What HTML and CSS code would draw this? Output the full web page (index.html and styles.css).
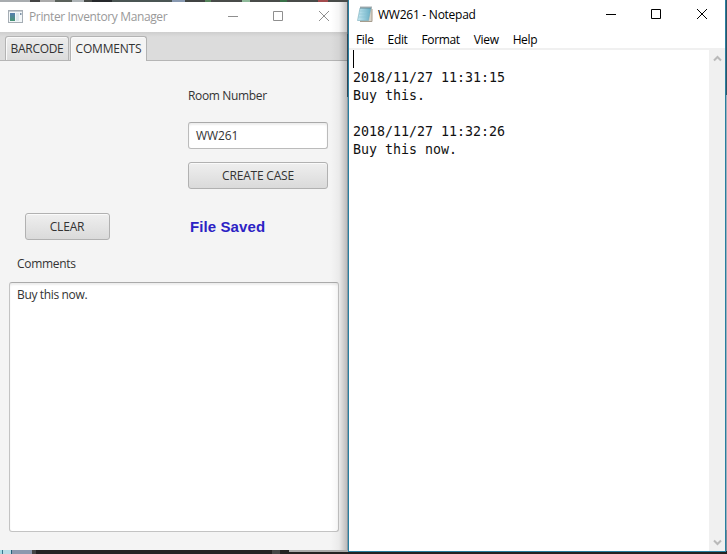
FILE: index.html
```html
<!DOCTYPE html>
<html lang="en">
<head>
<meta charset="utf-8">
<title>Printer Inventory Manager</title>
<link rel="stylesheet" href="styles.css">
</head>
<body>
<main class="desktop">
  <section class="window manager">
    <header class="titlebar">
      <svg class="app-icon" width="15" height="13" viewBox="0 0 15 13"><defs><linearGradient id="a" x2="0" y2="1"><stop stop-color="#557eb0"/><stop offset="1" stop-color="#469473"/></linearGradient></defs><rect x=".5" y=".5" width="14" height="12" fill="#f3f7f9" stroke="#a5adb4"/><path d="M1 1.5h13" stroke="#c5ccd2"/><path d="M2 3h5v8H2z" fill="url(#a)"/><path d="M8 3h3v8H8z" fill="#dce7ec"/><path d="M12 3h1.500v2H12z" fill="#8295a9"/></svg>
      <h1 class="title">Printer Inventory Manager</h1>
      <svg class="controls" width="103" height="12" viewBox="0 0 103 12" fill="none" stroke="#8f8f8f"><path d="M0 6.500h10M45.500 1.500h9v9h-9zM91 1l10 10M101 1L91 11"/></svg>
    </header>
    <nav class="tabs">
      <button class="tab">BARCODE</button>
      <button class="tab active">COMMENTS</button>
    </nav>
    <div class="form">
      <div class="room">
        <label class="room-label">Room Number</label>
        <div class="field">WW261</div>
        <button class="button create">CREATE CASE</button>
      </div>
      <div class="actions">
        <button class="button clear">CLEAR</button>
        <output class="status">File Saved</output>
      </div>
      <label class="comments-label">Comments</label>
      <div class="comments">Buy this now.</div>
    </div>
  </section>
  <section class="window notepad">
    <header class="np-titlebar">
      <svg class="np-icon" width="17" height="17" viewBox="0 0 17 17"><defs><linearGradient id="b"><stop stop-color="#c8e9f2"/><stop offset="1" stop-color="#65adc4"/></linearGradient></defs><path d="M4 2l11 .5v13L3 16z" fill="#d8d3c9"/><path d="M15 3v12.500H3" fill="none" stroke="#a69d8e"/><path d="M3 2h11l-2.500 12.500H.5z" fill="url(#b)" stroke="#79acbb" stroke-width=".6"/><path d="M2.500 5h10M2 8h10M1.500 11h10" stroke="#87bdcd" stroke-width=".5"/><path d="M3.500 1.500h11" stroke="#53666c" stroke-width="2" stroke-dasharray="1 1"/></svg>
      <h2 class="title">WW261 - Notepad</h2>
      <svg class="np-controls" width="103" height="12" viewBox="0 0 103 12" fill="none" stroke="#000"><path d="M0 6.500h10M45.500 1.500h9v9h-9zM91 1l10 10M101 1L91 11"/></svg>
    </header>
    <nav class="menu"><span>File</span><span>Edit</span><span>Format</span><span>View</span><span>Help</span></nav>
    <div class="editor">
      <pre class="document"><i class="caret"></i>
2018/11/27 11:31:15
Buy this.

2018/11/27 11:32:26
Buy this now.</pre>
      <div class="scrollbar">
        <svg width="9" height="7" viewBox="0 0 9 7" fill="none" stroke="#b9b9b9" stroke-width="2"><path d="M1 5.500l3.500-3.500L8 5.500"/></svg>
        <svg width="9" height="7" viewBox="0 0 9 7" fill="none" stroke="#b9b9b9" stroke-width="2"><path d="M1 1.500L4.500 5 8 1.500"/></svg>
      </div>
    </div>
  </section>
</main>
</body>
</html>
```
FILE: styles.css
```css
* { box-sizing: border-box; }
body { margin: 0; font: 12px/16px "Open Sans", "Noto Sans", sans-serif; letter-spacing: -.35px; color: #333; }
.desktop {
  position: relative; width: 727px; height: 554px; overflow: hidden;
  background:
    linear-gradient(90deg, #a8acaf 0 30px, #444 30px 40px, #aaa 40px 55px, #59605a 55px 72px, #aeb4b7 72px 84px, #464946 84px 92px, #25282b 92px 112px, #4a5553 112px 172px, #8798b0 172px 185px, #404342 185px 205px, #56845c 205px 211px, #484b49 211px 242px, #8fb99a 242px 250px, #484b49 250px 280px, #397047 280px 287px, #484b49 287px 318px, #a34b4d 318px 328px, #484b49 328px) 0 0 / 348px 2px no-repeat,
    linear-gradient(#315365 0 95px, #9fadba 95px 530px, #788794 530px) 726px 0 / 1px 551px no-repeat,
    linear-gradient(90deg, #a7dce6 0 2px, #38758c 2px 3px, #b8dce6 3px 11px, #286078 11px 12px, #8c98ae 12px 32px, #444 32px 36px, #242222 36px 272px, #464646 272px 280px, #242222 280px 289px, #aaa 289px 348px, #202426 348px) 0 550px / 727px 2px no-repeat,
    linear-gradient(90deg, #a7dce6 0 2px, #38758c 2px 3px, #b8dce6 3px 11px, #286078 11px 12px, #8c98ae 12px 32px, #444 32px 36px, #242222 36px 272px, #464646 272px 280px, #242222 280px) 0 552px / 727px 2px no-repeat,
    linear-gradient(#53636e 0 32px, #344654 32px 95px, #8b9ba5 95px) 347px 2px / 1px 548px no-repeat,
    #252525;
}
.window { position: absolute; display: flex; flex-direction: column; }
.manager { left: 0; top: 2px; width: 347px; height: 548px; background: #f4f4f4; }
.manager::after { content: ""; position: absolute; right: 0; top: 0; width: 16px; height: 548px; background: linear-gradient(90deg, transparent, rgba(0,0,0,.04) 50%, rgba(0,0,0,.23)); }
.titlebar { height: 30px; flex: none; display: flex; align-items: center; padding: 0 16px 0 8px; background: #fff; color: #999; letter-spacing: -.37px; }
.title { margin: 0; font: inherit; }
.titlebar .title { margin: 0 auto 0 6px; }
.titlebar .app-icon { margin-bottom: 2px; }
.titlebar .controls { margin-bottom: 2px; }
.tabs { height: 29px; flex: none; display: flex; align-items: flex-end; gap: 1px; padding-left: 5px; background: linear-gradient(#cecece, #dcdcdc 5px); border-bottom: 1px solid #b5b5b5; }
.tab { height: 24px; width: 64px; padding: 0; border: 1px solid #b3b3b3; border-bottom: 0; border-radius: 3px 3px 0 0; background: linear-gradient(#ededed, #dcdcdc); box-shadow: inset 1px 1px #fafafa; font: inherit; letter-spacing: -.3px; color: #333; }
.tab.active { width: 77px; height: 25px; margin-bottom: -1px; background: #f4f4f4; letter-spacing: -.2px; }
.form { padding: 27px 9px 0; }
.room { width: 140px; margin-left: 179px; display: flex; flex-direction: column; }
.room-label { height: 34px; }
.field { height: 27px; padding: 5px 7px; background: #fff; border: 1px solid #bbb; border-top-color: #a9a9a9; border-radius: 3px; box-shadow: inset 0 2px 2px #eee; letter-spacing: -.1px; }
.button { height: 27px; padding: 0; border: 1px solid #b1b1b1; border-radius: 3px; background: linear-gradient(#efefef, #dadada); box-shadow: inset 0 1px #fafafa; font: inherit; letter-spacing: -.2px; color: #333; }
.create { margin-top: 13px; }
.actions { display: flex; align-items: center; margin: 24px 0 0 16px; }
.clear { width: 85px; padding-right: 1px; }
.status { margin-left: 80px; font: bold 15px/18px "Liberation Sans", Arial, sans-serif; letter-spacing: .1px; color: #2c22c4; }
.comments-label { display: block; height: 26px; margin: 16px 0 0 8px; letter-spacing: -.3px; }
.comments { width: 330px; height: 250px; padding: 4px 7px; background: #fff; border: 1px solid #c3c3c3; border-top-color: #aaa; border-radius: 3px; box-shadow: inset 0 2px 2px #eee; }
.notepad { left: 348px; top: 0; width: 378px; height: 552px; background: #fff; border: solid #287fa0; border-width: 0 1px 1px; color: #000; }
.np-titlebar { height: 30px; flex: none; display: flex; align-items: center; padding: 0 16px 0 8px; letter-spacing: -.25px; }
.np-titlebar .title { margin: 0 auto 0 4px; }
.np-titlebar .np-icon { margin-bottom: 2px; }
.np-titlebar .np-controls { margin-bottom: 3px; }
.menu { height: 18px; flex: none; display: flex; gap: 14px; padding: 2px 0 0 7px; }
.menu span { white-space: nowrap; }
.editor { flex: 1; display: flex; border-top: 2px solid #f0f0f0; }
.document { flex: 1; margin: 0; padding-left: 4px; font: 13.3px/18px "DejaVu Sans Mono", monospace; letter-spacing: 0; color: #111; }
.caret { display: inline-block; width: 1px; height: 18px; margin-bottom: 1px; background: #000; vertical-align: top; }
.scrollbar { width: 16px; display: flex; flex-direction: column; justify-content: space-between; align-items: center; padding: 5px 0; background: #f0f0f0; }
```
